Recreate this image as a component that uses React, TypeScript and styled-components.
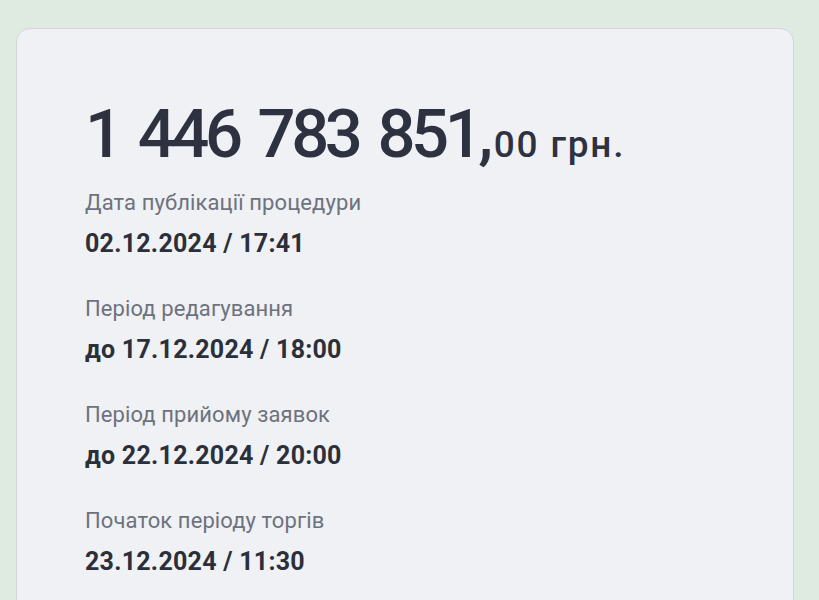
import styled, { createGlobalStyle } from "styled-components"

const Global = createGlobalStyle`
    html, body {
        margin: 0;
        padding: 0;
        background: #dfeae0;
        font-family: Roboto, "Noto Sans", sans-serif;
    }
`
const Page = styled.div`
    padding: 28px 25px 0 16px;
    height: 600px;
    box-sizing: border-box;
    overflow: hidden;
`
const Card = styled.div`
    background: #eff1f5;
    border: 1px solid #d3d6da;
    border-radius: 14px;
    padding: 67px 60px 60px 68px;
    min-height: 700px;
    box-sizing: border-box;
`
const Price = styled.div`
    display: flex;
    align-items: baseline;
    color: #2e3240;
    font-weight: 500;
    margin-bottom: 18px;
`
const Whole = styled.span`
    font-size: 67px;
    line-height: 76px;
    letter-spacing: -4.5px;
    word-spacing: 7px;
`
const Cents = styled.span`
    font-size: 37px;
    line-height: 1;
    letter-spacing: 1.8px;
    margin-left: 5px;
`
const List = styled.div`
    display: flex;
    flex-direction: column;
    gap: 37px;
`
const Item = styled.div`
    display: flex;
    flex-direction: column;
    gap: 13px;
`
const Label = styled.span`
    font-size: 22px;
    line-height: 26px;
    letter-spacing: 0.1px;
    color: #6e727d;
`
const Value = styled.span`
    font-size: 25px;
    line-height: 30px;
    font-weight: 700;
    letter-spacing: 0.25px;
    color: #2b2f3a;
`

const items = [
    { label: "Дата публікації процедури", value: "02.12.2024 / 17:41" },
    { label: "Період редагування", value: "до 17.12.2024 / 18:00" },
    { label: "Період прийому заявок", value: "до 22.12.2024 / 20:00" },
    { label: "Початок періоду торгів", value: "23.12.2024 / 11:30" },
]

export default function App(){
    return(
        <>
        <Global/>
        <Page>
            <Card>
                <Price>
                    <Whole>1 446 783 851,</Whole>
                    <Cents>00 грн.</Cents>
                </Price>
                <List>
                    {items.map((it)=>(
                        <Item key={it.label}>
                            <Label>{it.label}</Label>
                            <Value>{it.value}</Value>
                        </Item>
                    ))}
                </List>
            </Card>
        </Page>
        </>
    )
}
